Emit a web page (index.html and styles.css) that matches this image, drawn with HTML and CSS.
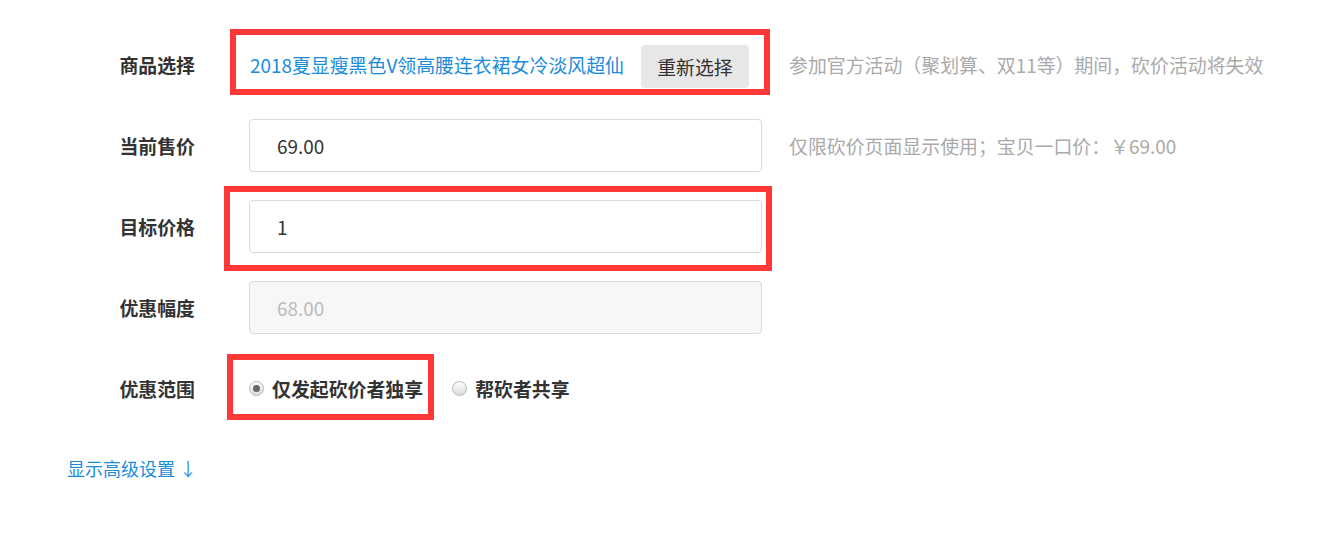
FILE: index.html
```html
<!DOCTYPE html>
<html lang="zh-CN">
<head>
<meta charset="utf-8">
<title>砍价设置</title>
<link rel="stylesheet" href="styles.css">
</head>
<body>
<div class="form">
  <div class="row row-first">
    <div class="label">商品选择</div>
    <div class="field product">
      <a class="product-link" href="#">2018夏显瘦黑色V领高腰连衣裙女冷淡风超仙</a>
      <button class="btn" type="button">重新选择</button>
      <span class="mark mark-product"></span>
    </div>
    <div class="hint">参加官方活动（聚划算、双11等）期间，砍价活动将失效</div>
  </div>
  <div class="row">
    <div class="label">当前售价</div>
    <div class="field">
      <div class="input">69.00</div>
    </div>
    <div class="hint">仅限砍价页面显示使用；宝贝一口价：￥69.00</div>
  </div>
  <div class="row">
    <div class="label">目标价格</div>
    <div class="field">
      <div class="input">1</div>
      <span class="mark mark-target"></span>
    </div>
  </div>
  <div class="row">
    <div class="label">优惠幅度</div>
    <div class="field">
      <div class="input input-disabled">68.00</div>
    </div>
  </div>
  <div class="row">
    <div class="label">优惠范围</div>
    <div class="field radios">
      <label class="radio"><span class="dot checked"></span>仅发起砍价者独享</label>
      <label class="radio"><span class="dot"></span>帮砍者共享</label>
      <span class="mark mark-scope"></span>
    </div>
  </div>
  <a class="advanced" href="#">显示高级设置 <span class="arrow">↓</span></a>
</div>
</body>
</html>
```
FILE: styles.css
```css
html, body {
  margin: 0;
  padding: 0;
  background: #fff;
}
body {
  font-family: "Noto Sans CJK SC", "Noto Sans", sans-serif;
  font-size: 18.9px;
  color: #333;
}
.form {
  padding-top: 38px;
  display: flex;
  flex-direction: column;
}
.row {
  display: flex;
  align-items: center;
  height: 53px;
  margin-bottom: 28px;
}
.label {
  width: 195px;
  text-align: right;
  font-weight: bold;
  color: #333;
  margin-right: 54px;
  flex: none;
}
.field {
  position: relative;
  width: 513px;
  height: 53px;
  display: flex;
  align-items: center;
  flex: none;
}
.product-link {
  color: #1b8bdc;
  text-decoration: none;
  margin-left: 1px;
  white-space: nowrap;
}
.btn {
  margin-left: 17px;
  height: 43px;
  width: 108px;
  border: none;
  border-radius: 4px;
  background: #e7e7e7;
  color: #333;
  font-family: inherit;
  font-size: 18.9px;
  padding: 0;
  margin-top: 4px;
}
.hint {
  margin-left: 27px;
  color: #aaa;
  white-space: nowrap;
}
.input {
  box-sizing: border-box;
  width: 513px;
  height: 53px;
  border: 1px solid #d9d9d9;
  border-radius: 4px;
  padding-left: 27px;
  display: flex;
  align-items: center;
  color: #333;
  background: #fff;
}
.input-disabled {
  background: #f7f7f7;
  color: #bbb;
}
.radio {
  display: flex;
  align-items: center;
  font-weight: bold;
  color: #333;
  margin-right: 29px;
}
.dot {
  box-sizing: border-box;
  width: 15px;
  height: 15px;
  border-radius: 50%;
  border: 1px solid #b5b5b5;
  background: linear-gradient(#fdfdfd, #dcdcdc);
  margin-right: 8px;
  display: flex;
  align-items: center;
  justify-content: center;
}
.dot.checked::after {
  content: "";
  width: 7px;
  height: 7px;
  border-radius: 50%;
  background: #666;
}
.mark {
  position: absolute;
  box-sizing: border-box;
  border: 6px solid #fd3838;
  pointer-events: none;
}
.mark-product {
  left: -19px;
  top: -9px;
  width: 540px;
  height: 66px;
}
.mark-target {
  left: -25px;
  top: -14px;
  width: 548px;
  height: 85px;
}
.mark-scope {
  left: -22px;
  top: -8px;
  width: 207px;
  height: 66px;
}
.advanced {
  align-self: flex-start;
  margin-left: 67px;
  margin-top: 12px;
  font-size: 18px;
  color: #1b8bdc;
  text-decoration: none;
}
.arrow {
  color: #3a8ee6;
}
```
